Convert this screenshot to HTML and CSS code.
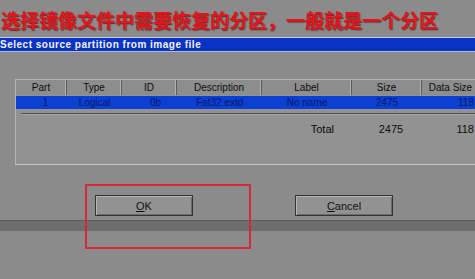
FILE: index.html
```html
<!DOCTYPE html>
<html lang="zh-CN">
<head>
    <meta charset="UTF-8">
    <title>Select source partition</title>
    <link rel="stylesheet" href="styles.css">
</head>
<body>
    <div class="screen">
        <div class="caption">选择镜像文件中需要恢复的分区，一般就是一个分区</div>
        <div class="titlebar">Select source partition from image file</div>

        <div class="panel">
            <div class="grid head">
                <div>Part</div>
                <div>Type</div>
                <div>ID</div>
                <div>Description</div>
                <div>Label</div>
                <div>Size</div>
                <div>Data Size</div>
            </div>
            <div class="grid row selected">
                <div class="c-part">1</div>
                <div>Logical</div>
                <div class="c-id">0b</div>
                <div class="c-desc">Fat32 extd</div>
                <div>No name</div>
                <div>2475</div>
                <div class="c-data">118</div>
            </div>
            <div class="rule"></div>
            <div class="grid row total">
                <div></div>
                <div></div>
                <div></div>
                <div></div>
                <div class="c-total">Total</div>
                <div class="c-size">2475</div>
                <div class="c-data">118</div>
            </div>
        </div>

        <div class="buttons">
            <button class="btn btn-ok"><u>O</u>K</button>
            <button class="btn btn-cancel"><u>C</u>ancel</button>
        </div>
        <div class="statusbar"></div>

        <div class="highlight"></div>
    </div>
</body>
</html>
```

FILE: styles.css
```css
html, body {
    margin: 0;
    padding: 0;
    background: #8b8b8b;
}
.screen {
    position: relative;
    width: 475px;
    height: 279px;
    overflow: hidden;
    background: #8b8b8b;
    font-family: "Liberation Sans", Arial, sans-serif;
}
.caption {
    height: 37px;
    padding-left: 1px;
    box-sizing: border-box;
    padding-top: 6px;
    font-family: "Noto Sans CJK SC", sans-serif;
    font-weight: bold;
    font-size: 19px;
    line-height: 27px;
    color: #e3141c;
    text-shadow: 1px 1px 1px #5a3030;
    white-space: nowrap;
}
.titlebar {
    height: 13px;
    border-top: 1px solid #c9cbd8;
    border-bottom: 1px solid #b8bac8;
    background: #0833c4;
    color: #f2f2f2;
    font-family: "Liberation Sans", Arial, sans-serif;
    font-weight: bold;
    font-size: 10px;
    line-height: 13px;
    letter-spacing: 0.5px;
    white-space: nowrap;
}
.panel {
    margin: 27px 0 0 15px;
    width: 470px;
    height: 86px;
    box-sizing: border-box;
    border-top: 1px solid #b5b5b5;
    border-left: 1px solid #b5b5b5;
    border-bottom: 1px solid #c4c4c4;
    background: #929292;
}
.grid {
    display: grid;
    grid-template-columns: 51px 55px 55px 85px 90px 70px 58px;
    font-size: 10px;
}
.head {
    height: 15px;
    line-height: 15px;
    color: #0c0c0c;
}
.head div {
    text-align: center;
    white-space: nowrap;
    background: #8d8d8d;
    border-right: 1px solid #5a5a5a;
    box-shadow: inset -1px 0 0 #b0b0b0;
}
.row {
    height: 13px;
    line-height: 13px;
}
.row div {
    text-align: center;
}
.selected {
    margin-top: 1px;
    background: #0b40d2;
    color: #08176a;
}
.c-part {
    padding-left: 8px;
}
.c-id {
    padding-left: 12px;
}
.selected .c-desc {
    text-align: left;
    padding-left: 19px;
}
.row .c-data {
    text-align: right;
    padding-right: 6px;
}
.rule {
    margin: 4px 0 0 5px;
    height: 1px;
    background: #4c4c4c;
    border-bottom: 1px solid #a8a8a8;
}
.total {
    margin-top: 8px;
    color: #0c0c0c;
    font-size: 11px;
}
.total .c-total {
    text-align: right;
    padding-right: 18px;
}
.total .c-size {
    padding-left: 8px;
}
.buttons {
    display: flex;
    gap: 102px;
    margin: 30px 0 0 95px;
    height: 21px;
}
.btn {
    width: 98px;
    height: 21px;
    padding: 0;
    background: #929292;
    border: 1px solid #333333;
    box-shadow: inset 1px 1px 0 #b6b6b6, inset -1px -1px 0 #6a6a6a;
    font-family: "Liberation Sans", Arial, sans-serif;
    font-size: 11px;
    color: #111111;
}
.statusbar {
    margin-top: 4px;
    height: 10px;
    border-top: 1px solid #5c5c5c;
    background: #6e6e6e;
}
.highlight {
    position: absolute;
    left: 85px;
    top: 184px;
    width: 166px;
    height: 65px;
    box-sizing: border-box;
    border: 2px solid #d9283a;
}
```
